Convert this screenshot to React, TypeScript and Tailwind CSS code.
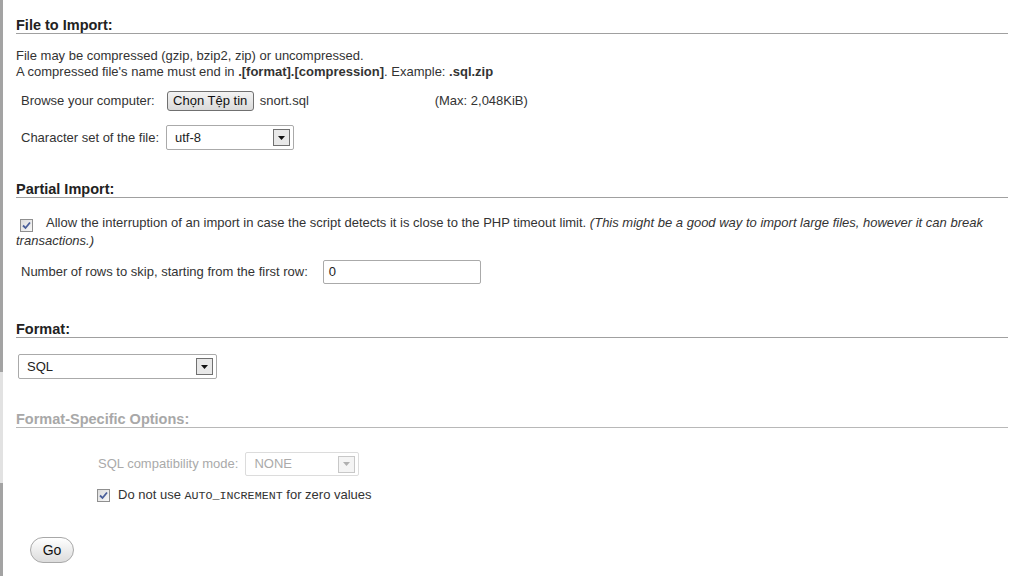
import React from "react";

function SelectBox({ value, className, disabled }: { value: string; className: string; disabled?: boolean }) {
  return (
    <div
      className={
        "flex items-center justify-between rounded-[2px] border bg-white pl-[8px] pr-[3px] " +
        (disabled ? "border-[#dcdcdc] text-[#aaaaaa] " : "border-[#aaaaaa] text-[#222222] ") +
        className
      }
    >
      <span>{value}</span>
      <span
        className={
          "flex h-[17px] w-[17px] items-center justify-center border " +
          (disabled ? "border-[#c8c8c8] bg-[#f4f4f4]" : "border-[#707070] bg-[#e8e8e8]")
        }
      >
        <svg width="7" height="4" viewBox="0 0 7 4">
          <polygon points="0,0 7,0 3.5,4" fill={disabled ? "#b0b0b0" : "#111111"} />
        </svg>
      </span>
    </div>
  );
}

function Check() {
  return (
    <span className="inline-flex h-[13px] w-[13px] items-center justify-center border border-[#8f8f8f] bg-gradient-to-br from-[#dcdcdc] to-[#f8f8f8] align-middle">
      <svg width="9" height="9" viewBox="0 0 9 9">
        <path d="M1 4.5 L3.5 7 L8 1.5" stroke="#4a5f9a" strokeWidth="1.8" fill="none" />
      </svg>
    </span>
  );
}

function Heading({ children, muted }: { children: React.ReactNode; muted?: boolean }) {
  return (
    <div
      className={
        "h-[17px] border-b text-[14.5px] font-bold leading-[16px] " +
        (muted ? "border-[#b8b8b8] text-[#a8a8a8]" : "border-[#a0a0a0] text-[#222222]")
      }
    >
      {children}
    </div>
  );
}

export default function App() {
  return (
    <div className="flex h-[576px] w-[1013px] overflow-hidden bg-white font-['Liberation_Sans',Arial,sans-serif] text-[13px] text-[#333333]">
      <div className="flex w-[3px] flex-col">
        <div className="h-[372px] bg-[#a3a3a3]" />
        <div className="h-[111px] bg-[#e2e2e2]" />
        <div className="flex-1 bg-[#a3a3a3]" />
      </div>
      <div className="flex flex-1 flex-col pl-[13px] pr-[5px] pt-[17px]">
        <Heading>File to Import:</Heading>

        <div className="mt-[14px] leading-[16px]">
          <div>File may be compressed (gzip, bzip2, zip) or uncompressed.</div>
          <div>
            A compressed file's name must end in <b>.[format].[compression]</b>. Example: <b>.sql.zip</b>
          </div>
        </div>

        <div className="mt-[10px] flex h-[22px] items-center pl-[5px]">
          <span>Browse your computer:</span>
          <span className="ml-[12px] flex h-[20px] w-[87px] items-center justify-center rounded-[3px] border border-[#707070] bg-gradient-to-b from-[#f3f3f3] to-[#dadada] text-[#111111]">
            Chọn Tệp tin
          </span>
          <span className="ml-[6px] w-[175px]">snort.sql</span>
          <span>(Max: 2,048KiB)</span>
        </div>

        <div className="mt-[13px] flex h-[25px] items-center pl-[5px]">
          <span>Character set of the file:</span>
          <SelectBox value="utf-8" className="ml-[7px] h-[25px] w-[128px]" />
        </div>

        <div className="mt-[31px]">
          <Heading>Partial Import:</Heading>
        </div>

        <div className="mt-[17px] leading-[16px]">
          <span className="ml-[4px] mr-[13px] inline-block align-[-2px]">
            <Check />
          </span>
          Allow the interruption of an import in case the script detects it is close to the PHP timeout limit.{" "}
          <i>(This might be a good way to import large files, however it can break transactions.)</i>
        </div>

        <div className="mt-[11px] flex h-[24px] items-center pl-[5px]">
          <span>Number of rows to skip, starting from the first row:</span>
          <span className="ml-[15px] flex h-[24px] w-[158px] items-center rounded-[2px] border border-[#aaaaaa] bg-white pl-[5px] text-[#222222]">
            0
          </span>
        </div>

        <div className="mt-[37px]">
          <Heading>Format:</Heading>
        </div>

        <div className="mt-[16px] pl-[2px]">
          <SelectBox value="SQL" className="h-[25px] w-[199px]" />
        </div>

        <div className="mt-[32px]">
          <Heading muted>Format-Specific Options:</Heading>
        </div>

        <div className="mt-[24px] flex h-[24px] items-center pl-[82px]">
          <span className="text-[#aaaaaa]">SQL compatibility mode:</span>
          <SelectBox value="NONE" disabled className="ml-[7px] h-[24px] w-[114px]" />
        </div>

        <div className="mt-[11px] flex h-[16px] items-center gap-[8px] pl-[81px]">
          <Check />
          <span>
            Do not use <span className="font-['Liberation_Mono',monospace] text-[11.7px]">AUTO_INCREMENT</span> for zero
            values
          </span>
        </div>

        <div className="mt-[34px] pl-[14px]">
          <span className="flex h-[26px] w-[44px] items-center justify-center rounded-[13px] border border-[#a8a8a8] bg-gradient-to-b from-[#ffffff] to-[#dcdcdc] text-[14px] text-[#111111]">
            Go
          </span>
        </div>
      </div>
    </div>
  );
}
